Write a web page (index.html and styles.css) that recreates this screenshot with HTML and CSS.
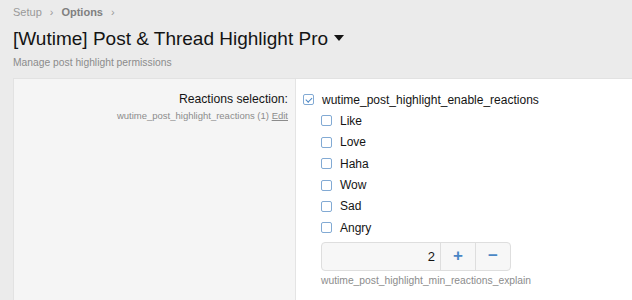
FILE: index.html
```html
<!DOCTYPE html>
<html>
<head>
    <title>Options</title>
    <link rel="stylesheet" href="styles.css">
</head>
<body>
    <div class="crumbs">
        <span>Setup</span><span class="sep">&rsaquo;</span><b>Options</b><span class="sep">&rsaquo;</span>
    </div>
    <h1 class="title">[Wutime] Post &amp; Thread Highlight Pro <span class="caret"></span></h1>
    <p class="desc">Manage post highlight permissions</p>

    <div class="block">
        <div class="row">
            <div class="label-col">
                <div class="label">Reactions selection:</div>
                <div class="hint">wutime_post_highlight_reactions (1) <a href="#">Edit</a></div>
            </div>
            <div class="input-col">
                <label class="check"><span class="box checked"></span>wutime_post_highlight_enable_reactions</label>
                <div class="sub">
                    <label class="check"><span class="box"></span>Like</label>
                    <label class="check"><span class="box"></span>Love</label>
                    <label class="check"><span class="box"></span>Haha</label>
                    <label class="check"><span class="box"></span>Wow</label>
                    <label class="check"><span class="box"></span>Sad</label>
                    <label class="check"><span class="box"></span>Angry</label>
                    <div class="spinner">
                        <div class="num">2</div>
                        <div class="btn">+</div>
                        <div class="btn">&minus;</div>
                    </div>
                    <div class="explain">wutime_post_highlight_min_reactions_explain</div>
                </div>
            </div>
        </div>
    </div>
</body>
</html>
```

FILE: styles.css
```css
body {
    margin: 0;
    padding: 0 0 0 13px;
    background: #ebebeb;
    font-family: "Liberation Sans", Arial, sans-serif;
    color: #141414;
    overflow: hidden;
}
.crumbs {
    padding-top: 6px;
    font-size: 11px;
    color: #999;
    height: 14px;
}
.crumbs b {
    color: #808080;
}
.crumbs .sep {
    margin: 0 8px;
}
.title {
    margin: 7px 0 0;
    font-size: 19px;
    font-weight: normal;
    line-height: 24px;
}
.caret {
    display: inline-block;
    width: 0;
    height: 0;
    border-left: 5.5px solid transparent;
    border-right: 5.5px solid transparent;
    border-top: 6px solid #141414;
    vertical-align: middle;
    margin-left: 1px;
    margin-top: -3px;
}
.desc {
    margin: 6px 0 0;
    font-size: 10.3px;
    color: #8c8c8c;
}
.block {
    margin-top: 10px;
    border: 1px solid #e2e2e2;
    border-right: none;
    background: #fff;
}
.row {
    display: flex;
    border-bottom: 1px solid #dcdcdc;
}
.label-col {
    width: 274px;
    flex: none;
    background: #f5f5f5;
    border-right: 1px solid #e4e4e4;
    text-align: right;
    padding: 13px 7px 0 0;
}
.label {
    font-size: 12.2px;
    line-height: 15px;
}
.hint {
    margin-top: 3px;
    font-size: 9.5px;
    color: #8c8c8c;
}
.hint a {
    color: #8c8c8c;
}
.input-col {
    padding: 13px 0 14px 7px;
}
.check {
    display: flex;
    align-items: center;
    font-size: 12px;
    height: 15px;
    margin-bottom: 6.4px;
}
.box {
    width: 9px;
    height: 9px;
    border: 1px solid #82aad4;
    border-radius: 2px;
    background: #fff;
    margin-right: 8px;
    position: relative;
}
.box.checked::after {
    content: "";
    position: absolute;
    left: 2.5px;
    top: 0.5px;
    width: 2.5px;
    height: 5px;
    border: solid #4a86c5;
    border-width: 0 1.3px 1.3px 0;
    transform: rotate(45deg);
}
.sub {
    padding-left: 18px;
}
.spinner {
    display: flex;
    width: 188px;
    height: 27px;
    border: 1px solid #dedede;
    border-radius: 4px;
    background: #f7f7f7;
    margin-top: 4px;
}
.num {
    flex: 1;
    text-align: right;
    padding-right: 5px;
    font-size: 13px;
    line-height: 27px;
}
.btn {
    width: 34px;
    border-left: 1px solid #dedede;
    text-align: center;
    color: #4a86c5;
    font-size: 17px;
    line-height: 26px;
    font-weight: bold;
}
.explain {
    margin-top: 4px;
    font-size: 10.3px;
    color: #8c8c8c;
}
```
